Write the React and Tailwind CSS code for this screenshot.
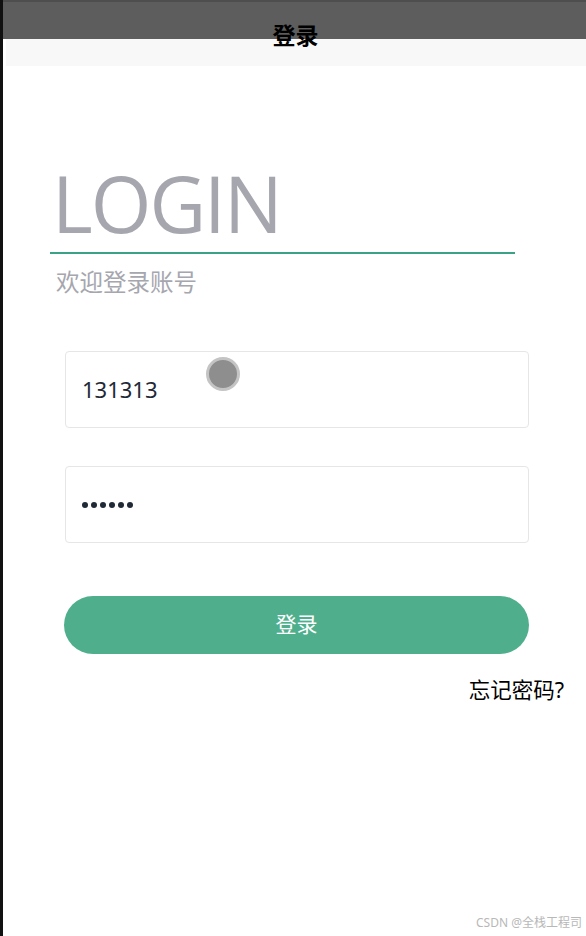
import React from 'react';

const App = () => {
  return (
    <div className="flex h-[936px] w-[586px] overflow-hidden bg-white" style={{ fontFamily: '"Noto Sans", "Noto Sans CJK SC", sans-serif' }}>
      <div className="w-[3px] shrink-0 bg-[#111]" />
      <div className="relative flex min-w-0 flex-1 flex-col">
        {/* top bar */}
        <div className="h-[39px] shrink-0 border-t-2 border-[#4e4e4e] bg-[#5d5d5d]" />
        <div className="ml-[3px] h-[27px] shrink-0 bg-[#f8f8f8]" />
        <div className="absolute left-0 right-0 top-[21px] flex justify-center pl-[2px]">
          <span className="text-[23px] font-bold leading-[28px] text-black">登录</span>
        </div>

        {/* heading */}
        <div className="pl-[47px] pr-[71px] pt-[98px]">
          <div className="pl-[2px] text-[78px] font-normal leading-[78px] tracking-[-2px] text-[#a6a6ae]" style={{ fontFamily: '"Open Sans", sans-serif' }}>
            LOGIN
          </div>
          <div className="mt-[10px] h-[2px] bg-[#3aa387]" />
          <div className="mt-[15px] pl-[6px] text-[23.5px] leading-[26px] text-[#a6a6ae]">欢迎登录账号</div>
        </div>

        {/* form */}
        <div className="flex flex-col gap-[38px] pl-[62px] pr-[57px] pt-[56px]">
          <div className="relative flex h-[77px] items-center rounded-[4px] border border-[#e6e6e6] pl-[16px]">
            <span className="text-[22px] text-[#1f2a36]">131313</span>
            <div className="absolute left-[140px] top-[5px] h-[34px] w-[34px] rounded-full border-[3px] border-[#c4c4c4] bg-[#8e8e8e]" />
          </div>
          <div className="flex h-[77px] items-center rounded-[4px] border border-[#e6e6e6] pl-[16px]">
            <span className="flex gap-[3px]">
              {[0, 1, 2, 3, 4, 5].map((i) => (
                <span key={i} className="h-[6px] w-[6px] rounded-full bg-[#1f2a36]" />
              ))}
            </span>
          </div>
        </div>

        <div className="pl-[61px] pr-[57px] pt-[53px]">
          <button type="button" className="flex h-[58px] w-full items-center justify-center rounded-full bg-[#4faf8d] text-[21px] text-white">
            登录
          </button>
        </div>

        <div className="flex justify-end pr-[22px] pt-[23px]">
          <span className="text-[21.5px] leading-[26px] text-black">忘记密码?</span>
        </div>

        <div className="absolute bottom-[4px] right-[4px] text-[12px] text-[#b8b8b8]">CSDN @全栈工程司</div>
      </div>
    </div>
  );
};

export default App;
